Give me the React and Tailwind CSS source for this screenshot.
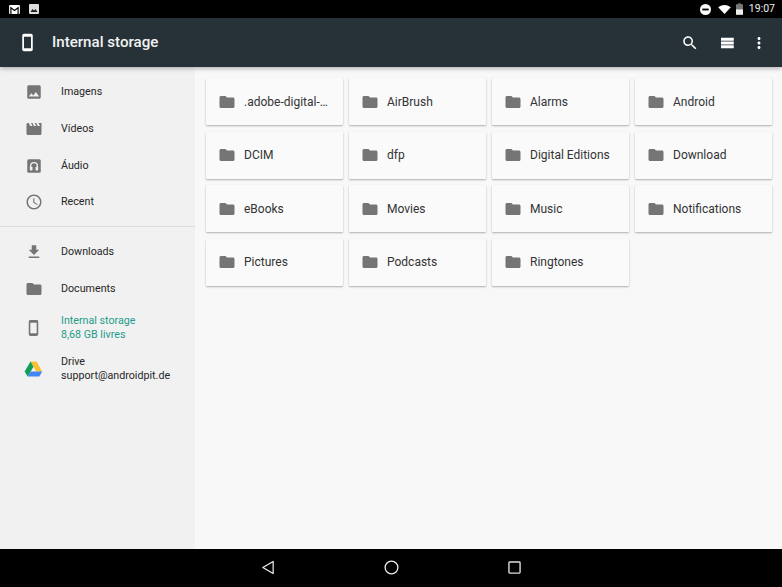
const font = { fontFamily: 'Roboto, sans-serif' };

function Folder({ className = '' }) {
  return (
    <svg viewBox="0 0 24 24" className={className} fill="#757575">
      <path d="M10 4H4c-1.100 0-2 .9-2 2v12c0 1.100.9 2 2 2h16c1.100 0 2-.9 2-2V8c0-1.100-.9-2-2-2h-8l-2-2z" />
    </svg>
  );
}

function Phone({ color, className = '' }) {
  return (
    <svg viewBox="0 0 24 24" className={className} fill={color}>
      <path d="M16 2H8C6.900 2 6 2.900 6 4v16c0 1.100.9 2 2 2h8c1.100 0 2-.9 2-2V4c0-1.100-.9-2-2-2zm0 16.500H8v-13h8v13z" />
    </svg>
  );
}

const icons = {
  image: (
    <svg viewBox="0 0 24 24" className="w-[18px] h-[18px]" fill="#757575">
      <path d="M21 19V5c0-1.100-.9-2-2-2H5c-1.100 0-2 .9-2 2v14c0 1.100.9 2 2 2h14c1.100 0 2-.9 2-2zM8.500 13.500l2.500 3 3.500-4.500 4.500 6H5l3.500-4.500z" />
    </svg>
  ),
  video: (
    <svg viewBox="0 0 24 24" className="w-[18px] h-[18px]" fill="#757575">
      <path d="M18 4l2 4h-3l-2-4h-2l2 4h-3l-2-4H8l2 4H7L5 4H4c-1.100 0-2 .9-2 2v12c0 1.100.9 2 2 2h16c1.100 0 2-.9 2-2V4h-4z" />
    </svg>
  ),
  audio: (
    <svg viewBox="0 0 24 24" className="w-[18px] h-[18px]">
      <rect x="3" y="3" width="18" height="18" rx="2" fill="#757575" />
      <path d="M7.500 15v-3a4.500 4.500 0 0 1 9 0v3" fill="none" stroke="#f1f1f1" strokeWidth="1.800" />
      <rect x="6.500" y="13" width="3.500" height="5" rx="1" fill="#f1f1f1" />
      <rect x="14" y="13" width="3.500" height="5" rx="1" fill="#f1f1f1" />
    </svg>
  ),
  clock: (
    <svg viewBox="0 0 24 24" className="w-[18px] h-[18px]" fill="#757575">
      <path d="M11.990 2C6.470 2 2 6.480 2 12s4.470 10 9.990 10C17.520 22 22 17.520 22 12S17.520 2 11.990 2zM12 20c-4.420 0-8-3.580-8-8s3.580-8 8-8 8 3.580 8 8-3.580 8-8 8zm.500-13H11v6l5.250 3.150.750-1.230-4.500-2.670z" />
    </svg>
  ),
  download: (
    <svg viewBox="0 0 24 24" className="w-[18px] h-[18px]" fill="#757575">
      <path d="M19 9h-4V3H9v6H5l7 7 7-7zM5 18v2h14v-2H5z" />
    </svg>
  ),
  folder: <Folder className="w-[18px] h-[18px]" />,
  phone: <Phone color="#757575" className="w-[20px] h-[20px]" />,
  drive: (
    <svg viewBox="0 0 24 24" className="w-[20px] h-[20px]">
      <path d="M8.200 2.500h7.600L23 15h-7.600z" fill="#fbc02d" />
      <path d="M8.200 2.500L.8 15l3.800 6.500L12 9z" fill="#0f9d58" />
      <path d="M4.600 21.500h14.800L23 15H8.400z" fill="#4285f4" />
    </svg>
  ),
};

function NavItem({ icon, lines, active, h = 'h-[36.500px]' }) {
  return (
    <div className={`flex items-center pl-[24px] ${h}`}>
      <div className="w-[19px] flex justify-center shrink-0">{icons[icon]}</div>
      <div className={`ml-[18px] text-[10.700px] leading-[14px] ${active ? 'text-[#1f9c8c]' : 'text-[#262626]'}`}>
        {lines.map((l) => (
          <div key={l}>{l}</div>
        ))}
      </div>
    </div>
  );
}

const folders = [
  '.adobe-digital-…', 'AirBrush', 'Alarms', 'Android',
  'DCIM', 'dfp', 'Digital Editions', 'Download',
  'eBooks', 'Movies', 'Music', 'Notifications',
  'Pictures', 'Podcasts', 'Ringtones',
];

export default function App() {
  return (
    <div style={font} className="w-[782px] h-[587px] flex flex-col overflow-hidden bg-[#f8f8f8]">
      <div className="h-[18px] bg-black flex items-center justify-between pl-[9px] pr-[7px] shrink-0">
        <div className="flex items-center gap-[9px]">
          <svg viewBox="0 0 12 10" className="w-[11px] h-[9px]">
            <rect width="12" height="10" rx="1" fill="#fff" />
            <path d="M2 10V3l4 3 4-3v7" fill="none" stroke="#000" strokeWidth="1.300" />
          </svg>
          <svg viewBox="0 0 10 10" className="w-[10px] h-[10px]">
            <rect width="10" height="10" rx="1" fill="#ddd" />
            <path d="M1.500 8L3.500 5l1.500 1.500L6.500 5 8.500 8z" fill="#222" />
          </svg>
        </div>
        <div className="flex items-center">
          <svg viewBox="0 0 12 12" className="w-[11px] h-[11px]">
            <circle cx="6" cy="6" r="6" fill="#fff" />
            <rect x="2.500" y="5" width="7" height="2" fill="#000" />
          </svg>
          <svg viewBox="0 0 14 10" className="w-[13px] h-[9px] ml-[7px]">
            <path d="M0 2.500Q7-2.500 14 2.500L7 10z" fill="#fff" />
          </svg>
          <svg viewBox="0 0 8 13" className="w-[7px] h-[12px] ml-[5px]">
            <path d="M2.500 0h3v1H8v12H0V1h2.500z" fill="#777" />
            <rect y="7" width="8" height="6" fill="#eee" />
          </svg>
          <span className="ml-[6px] text-[10.500px] text-[#eeeeee]">19:07</span>
        </div>
      </div>

      <div className="h-[49px] bg-[#263238] flex items-center pl-[17px] pr-[14px] shrink-0 z-10 shadow-[0_2px_4px_rgba(0,0,0,0.25)]">
        <Phone color="#fff" className="w-[21px] h-[21px]" />
        <span className="ml-[14px] text-[#f2f2f2] text-[15.100px] font-medium">Internal storage</span>
        <div className="ml-auto flex items-center">
          <svg viewBox="0 0 24 24" className="w-[18px] h-[18px]" fill="#fff">
            <path d="M15.500 14h-.790l-.280-.270C15.410 12.590 16 11.110 16 9.500 16 5.910 13.090 3 9.500 3S3 5.910 3 9.500 5.910 16 9.500 16c1.610 0 3.090-.590 4.230-1.570l.270.280v.790l5 4.990L20.490 19l-4.990-5zm-6 0C7.010 14 5 11.990 5 9.500S7.010 5 9.500 5 14 7.010 14 9.500 11.990 14 9.500 14z" />
          </svg>
          <svg viewBox="0 0 24 24" className="w-[18px] h-[18px] ml-[18.500px]" fill="#fff">
            <path d="M4 14h17v-4H4v4zm0 5h17v-4H4v4zM4 5v4h17V5H4z" />
          </svg>
          <svg viewBox="0 0 24 24" className="w-[18px] h-[18px] ml-[14.500px]" fill="#fff">
            <path d="M12 8c1.100 0 2-.9 2-2s-.9-2-2-2-2 .9-2 2 .9 2 2 2zm0 2c-1.100 0-2 .9-2 2s.9 2 2 2 2-.9 2-2-.9-2-2-2zm0 6c-1.100 0-2 .9-2 2s.9 2 2 2 2-.9 2-2-.9-2-2-2z" />
          </svg>
        </div>
      </div>

      <div className="flex-1 flex min-h-0">
        <div className="w-[195px] bg-[#f1f1f1] shrink-0 pt-[7px]">
          <NavItem icon="image" lines={['Imagens']} />
          <NavItem icon="video" lines={['Vídeos']} h="h-[37px]" />
          <NavItem icon="audio" lines={['Áudio']} />
          <NavItem icon="clock" lines={['Recent']} />
          <div className="h-px bg-[#dcdcdc] mt-[5.500px] mb-[7px]" />
          <NavItem icon="download" lines={['Downloads']} />
          <NavItem icon="folder" lines={['Documents']} />
          <NavItem icon="phone" lines={['Internal storage', '8,68 GB livres']} active h="h-[41.500px]" />
          <NavItem icon="drive" lines={['Drive', 'support@androidpit.de']} h="h-[40.500px]" />
        </div>
        <div className="flex-1 pt-[11.400px] pl-[11px] pr-[10px]">
          <div className="grid grid-cols-[repeat(4,137px)] gap-x-[6px] gap-y-[6.500px]">
            {folders.map((f) => (
              <div key={f} className="h-[47px] bg-[#fafafa] rounded-[1px] shadow-[0_1px_2px_rgba(0,0,0,0.3)] flex items-center pl-[12px]">
                <Folder className="w-[18px] h-[18px] shrink-0" />
                <span className="ml-[8px] text-[12px] text-[#333333] whitespace-nowrap">{f}</span>
              </div>
            ))}
          </div>
        </div>
      </div>

      <div className="h-[38px] bg-black shrink-0 flex items-center justify-center pb-[1px]">
        <div className="flex items-center gap-[109px]">
          <svg viewBox="0 0 14 16" className="w-[14px] h-[15px]">
            <path d="M12.500 1.500v13L1.500 8z" fill="none" stroke="#eee" strokeWidth="1.300" strokeLinejoin="round" />
          </svg>
          <svg viewBox="0 0 16 16" className="w-[15px] h-[15px]">
            <circle cx="8" cy="8" r="6.800" fill="none" stroke="#eee" strokeWidth="1.400" />
          </svg>
          <svg viewBox="0 0 14 14" className="w-[13px] h-[13px]">
            <rect x="1" y="1" width="12" height="12" rx="0.800" fill="none" stroke="#ddd" strokeWidth="1.500" />
          </svg>
        </div>
      </div>
    </div>
  );
}
